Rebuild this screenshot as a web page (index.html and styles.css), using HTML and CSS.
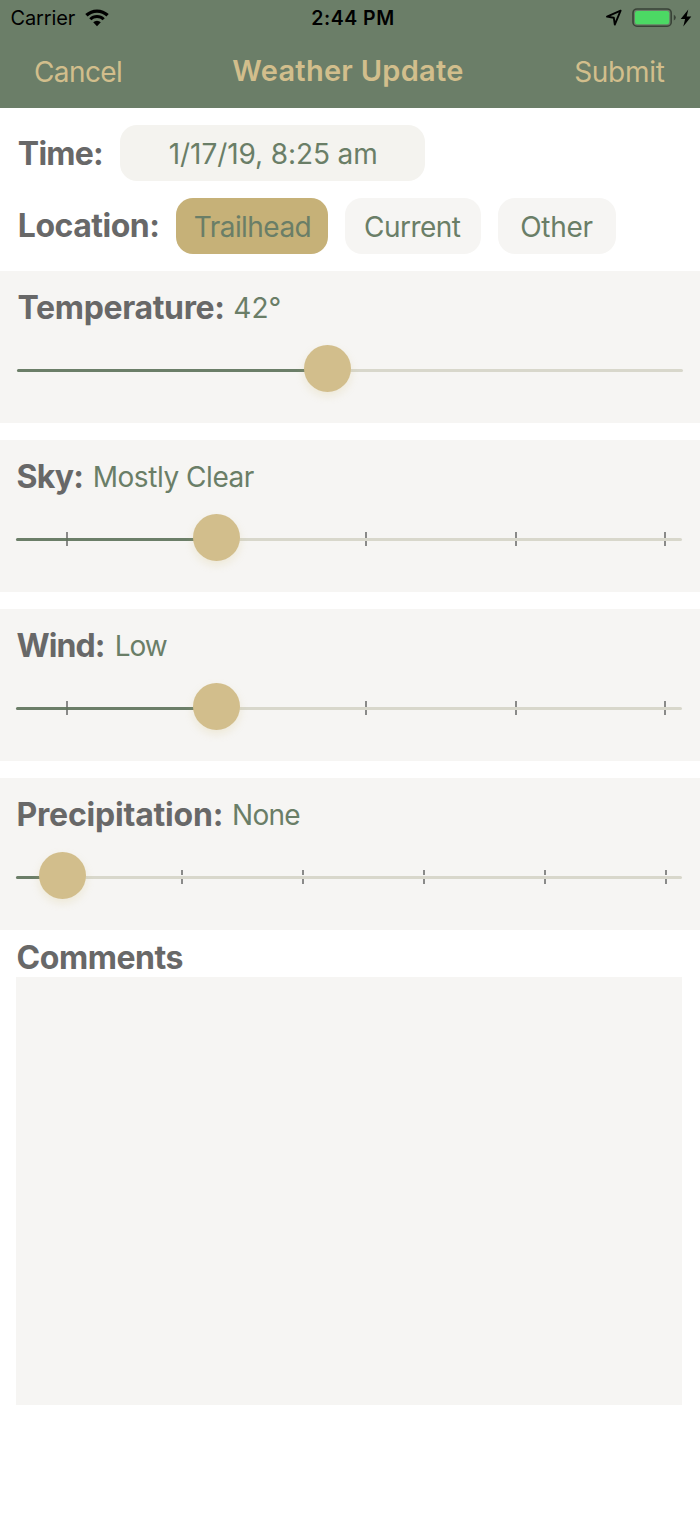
FILE: index.html
```html
<!DOCTYPE html>
<html lang="en">
<head>
<meta charset="utf-8">
<title>Weather Update</title>
<link rel="stylesheet" href="styles.css">
</head>
<body>
<header class="header">
  <div class="status">
    <div class="status-left">
      <span class="carrier">Carrier</span>
      <svg class="wifi" width="24" height="18" viewBox="0 0 24 18">
        <path d="M1.4 6.3a15.3 15.3 0 0 1 21.2 0" fill="none" stroke="#000" stroke-width="3.3"/>
        <path d="M5.3 10.2a9.6 9.6 0 0 1 13.4 0" fill="none" stroke="#000" stroke-width="3"/>
        <path d="M8.2 13.3a5.5 5.5 0 0 1 7.6 0L12 17.2z" fill="#000"/>
      </svg>
    </div>
    <span class="clock">2:44 PM</span>
    <div class="status-right">
      <svg class="locate" width="18" height="18" viewBox="0 0 18 18">
        <path d="M15.6 1.6L2 7.6l6.8 1.1 1 6.9z" fill="none" stroke="#000" stroke-width="1.9" stroke-linejoin="round"/>
      </svg>
      <svg class="battery" width="45" height="20" viewBox="0 0 45 20">
        <rect x="1" y="1" width="38.2" height="17.2" rx="4" fill="none" stroke="#394237" stroke-width="1.6"/>
        <rect x="3" y="3" width="34.2" height="13.2" rx="2.2" fill="#4cd964"/>
        <path d="M41.8 6.7q2 .8 2 2.9t-2 2.9z" fill="#394237"/>
      </svg>
      <svg class="bolt" width="12" height="18" viewBox="0 0 12 18">
        <path d="M8.3.6L.7 10h4.4l-1.8 7.4L11.3 7.5H6.7z" fill="#000"/>
      </svg>
    </div>
  </div>
  <nav class="nav">
    <span class="nav-link cancel">Cancel</span>
    <h1 class="title">Weather Update</h1>
    <span class="nav-link submit">Submit</span>
  </nav>
</header>
<main>
  <div class="row row-time">
    <span class="label time-label">Time:</span>
    <span class="chip chip-time"><span class="time-text">1/17/19, 8:25 am</span></span>
  </div>
  <div class="row row-location">
    <span class="label location-label">Location:</span>
    <span class="chip chip-selected"><span class="trail-text">Trailhead</span></span>
    <span class="chip chip-current"><span class="current-text">Current</span></span>
    <span class="chip chip-other"><span class="other-text">Other</span></span>
  </div>
  <section class="panel panel-temperature">
    <div class="heading"><span class="label temp-label">Temperature:</span><span class="value temp-value">42°</span></div>
    <div class="slider">
      <div class="fill"></div>
      <div class="thumb"></div>
    </div>
  </section>
  <section class="panel panel-sky">
    <div class="heading"><span class="label sky-label">Sky:</span><span class="value sky-value">Mostly Clear</span></div>
    <div class="slider">
      <div class="ticks five"><i></i><i></i><i></i><i></i><i></i></div>
      <div class="fill"></div>
      <div class="tick-over"></div>
      <div class="thumb"></div>
    </div>
  </section>
  <section class="panel panel-wind">
    <div class="heading"><span class="label wind-label">Wind:</span><span class="value wind-value">Low</span></div>
    <div class="slider">
      <div class="ticks five"><i></i><i></i><i></i><i></i><i></i></div>
      <div class="fill"></div>
      <div class="tick-over"></div>
      <div class="thumb"></div>
    </div>
  </section>
  <section class="panel panel-precipitation">
    <div class="heading"><span class="label precip-label">Precipitation:</span><span class="value precip-value">None</span></div>
    <div class="slider">
      <div class="ticks six"><i></i><i></i><i></i><i></i><i></i><i></i></div>
      <div class="fill"></div>
      <div class="thumb"></div>
    </div>
  </section>
  <div class="comments">
    <span class="label comments-label">Comments</span>
    <div class="comments-box"></div>
  </div>
</main>
</body>
</html>
```
FILE: styles.css
```css
* { box-sizing: border-box; }
body {
  margin: 0;
  width: 700px;
  height: 1515px;
  overflow: hidden;
  background: #fff;
  font-family: Inter, "Liberation Sans", sans-serif;
  color: #6a7e67;
  white-space: nowrap;
}
.header { height: 108.3px; background: #6b7e68; }
.status {
  height: 36px;
  display: grid;
  grid-template-columns: 1fr auto 1fr;
  align-items: center;
  color: #000;
  font-size: 20px;
  line-height: 36px;
}
.status-left { display: flex; align-items: center; padding-left: 10.5px; gap: 9.5px; }
.carrier { letter-spacing: -0.12px; }
.clock { font-weight: 600; font-size: 19.5px; letter-spacing: 0.5px; padding-left: 6px; }
.status-right { display: flex; align-items: center; justify-content: flex-end; padding-right: 8px; }
.locate { margin-right: 9px; }
.battery { margin-right: 3px; }
.nav {
  height: 71px;
  display: grid;
  grid-template-columns: 1fr auto 1fr;
  align-items: center;
  padding: 0 35.5px 0 34px;
  color: #d2be8c;
}
.nav-link { font-size: 28px; }
.cancel { letter-spacing: -0.6px; }
.submit { text-align: right; letter-spacing: -0.3px; }
.title { margin: 0; font-size: 29px; font-weight: 600; letter-spacing: 0.28px; padding: 0 2.5px 2px 0; }
.row { display: flex; align-items: center; padding-left: 17.8px; height: 55.5px; }
.row-time { margin-top: 17px; }
.row-location { margin-top: 17.3px; margin-bottom: 17px; }
.label { font-size: 32px; font-weight: 700; color: #686868; line-height: 40px; padding-top: 1px; }
.time-label { width: 102.7px; letter-spacing: -0.75px; }
.location-label { width: 158.7px; letter-spacing: -0.5px; }
.chip {
  height: 55.5px;
  border-radius: 17px;
  background: #f6f5f3;
  display: flex;
  align-items: center;
  justify-content: center;
  font-size: 28px;
  padding-top: 2px;
}
.chip-time { width: 304.5px; background: #f4f3ef; padding-top: 1px; }
.chip-selected { width: 152px; background: #c6b178; }
.chip-current { width: 135.5px; margin-left: 17px; }
.chip-other { width: 118px; margin-left: 17px; }
.time-text { letter-spacing: -0.1px; padding-left: 1px; }
.trail-text { letter-spacing: -0.55px; }
.current-text { letter-spacing: -0.5px; padding-right: 2px; }
.other-text { letter-spacing: -0.3px; padding-right: 1px; }
.panel { height: 152px; margin-bottom: 17px; background: #f6f5f3; padding: 16px 18px 0 16px; }
.panel-temperature { padding-left: 17px; padding-right: 17px; }
.panel-precipitation { margin-bottom: 0; }
.heading { display: flex; align-items: flex-start; height: 40px; }
.heading .label { padding-left: 0.5px; }
.value { font-size: 28px; line-height: 40px; padding-top: 1px; }
.temp-label { width: 216.3px; letter-spacing: -0.33px; }
.sky-label { width: 76.7px; letter-spacing: -0.8px; }
.wind-label { width: 98.7px; letter-spacing: -0.95px; }
.precip-label { width: 216px; letter-spacing: -0.2px; }
.sky-value { letter-spacing: -0.45px; }
.wind-value { letter-spacing: -1px; }
.precip-value { letter-spacing: -0.7px; }
.slider {
  position: relative;
  width: 666px;
  height: 3.4px;
  margin-top: 42px;
  border-radius: 2px;
  background: #d8d7cb;
}
.fill { position: absolute; left: 0; top: 0; height: 100%; width: 200px; border-radius: 2px; background: #6b7e68; }
.thumb {
  position: absolute;
  top: -23.7px;
  left: 176.5px;
  width: 47px;
  height: 47px;
  border-radius: 50%;
  background: #d2be8c;
  box-shadow: 0 4px 9px rgba(210, 190, 120, 0.22);
}
.panel-temperature .fill { width: 300px; }
.panel-temperature .thumb { left: 286.7px; }
.panel-precipitation .fill { width: 40px; }
.panel-precipitation .thumb { left: 22.7px; }
.ticks { position: absolute; top: -5.5px; height: 14px; display: flex; justify-content: space-between; }
.ticks i {
  width: 2px;
  background: linear-gradient(#8a8a89 5.5px, transparent 5.5px, transparent 9px, #8a8a89 9px);
}
.five { left: 50.2px; width: 600.2px; }
.six { left: 44.5px; width: 606.3px; }
.tick-over { position: absolute; left: 50.2px; top: 0; width: 2px; height: 3.4px; background: #64735f; }
.comments { padding: 7px 18px 0 16px; }
.comments-label { display: block; padding-left: 0.5px; letter-spacing: -0.45px; height: 40.3px; }
.comments-box { height: 428px; background: #f6f5f3; }
```
